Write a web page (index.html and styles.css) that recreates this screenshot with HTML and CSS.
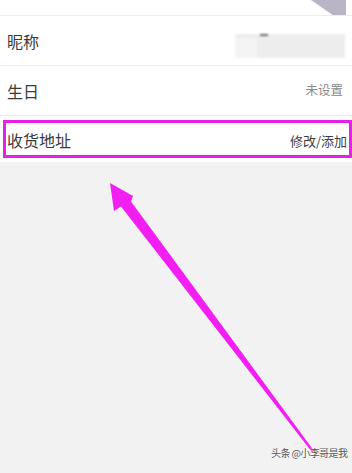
FILE: index.html
```html
<!DOCTYPE html>
<html lang="zh">
<head>
<meta charset="utf-8">
<link rel="stylesheet" href="styles.css">
</head>
<body>
<div class="page">
  <div class="list">
    <div class="row row-top"></div>
    <div class="row">
      <span class="label">昵称</span>
    </div>
    <div class="row">
      <span class="label">生日</span>
      <span class="value">未设置</span>
    </div>
    <div class="row-wrap">
      <div class="row row-hl">
        <span class="label">收货地址</span>
        <span class="value value-dark">修改/添加</span>
      </div>
    </div>
  </div>
  <div class="corner"></div>
  <div class="blur"><span class="blur-left"></span><span class="blur-dash"></span></div>
  <svg class="arrow" width="352" height="473" viewBox="0 0 352 473">
    <polygon points="110,183 133,196 131,201.5 314,451 312,452 121,206.5 114,211" fill="#f21ff2"/>
  </svg>
  <div class="mark">头条 @小李哥是我</div>
</div>
</body>
</html>
```
FILE: styles.css
```css
html, body {
  margin: 0;
  padding: 0;
}
body {
  background: #f2f2f2;
  font-family: "Noto Sans CJK SC", "Noto Sans", sans-serif;
}
.page {
  position: relative;
  width: 352px;
  height: 473px;
  overflow: hidden;
}
.list {
  background: #ffffff;
  padding-bottom: 4px;
}
.row {
  display: flex;
  align-items: center;
  justify-content: space-between;
  padding: 0 9px 0 7px;
  border-bottom: 1px solid #ededed;
  box-sizing: border-box;
  height: 50px;
}
.row-top {
  height: 16px;
}
.label {
  font-size: 16px;
  color: #3a3a3a;
  line-height: 1;
}
.value {
  font-size: 12.5px;
  color: #8a8a8a;
  line-height: 1;
}
.value-dark {
  color: #3e3e3e;
  font-size: 13px;
}
.row-wrap {
  padding: 4px 0 0 3px;
}
.row-hl {
  height: 38px;
  border: 3px solid #e81fe8;
  padding: 2px 2px 0 1px;
}
.corner {
  position: absolute;
  left: 311px;
  top: 0;
  width: 35px;
  height: 15px;
  background: #b9b5c6;
  clip-path: polygon(0 0, 100% 0, 100% 100%, 62% 100%);
}
.blur {
  position: absolute;
  left: 235px;
  top: 34px;
  width: 110px;
  height: 24px;
  background: #ededed;
  filter: blur(0.8px);
}
.blur-left {
  position: absolute;
  left: 0;
  top: 4px;
  width: 22px;
  height: 20px;
  background: #f4f4f4;
}
.blur-dash {
  position: absolute;
  left: 25px;
  top: 0;
  width: 8px;
  height: 2px;
  background: #666;
}
.arrow {
  position: absolute;
  left: 0;
  top: 0;
}
.mark {
  position: absolute;
  left: 271px;
  top: 446px;
  font-size: 10px;
  letter-spacing: -0.6px;
  line-height: 13px;
  color: #555;
  text-shadow: 0 0 2px #fff, 0 0 1px #fff;
  white-space: nowrap;
}
```
